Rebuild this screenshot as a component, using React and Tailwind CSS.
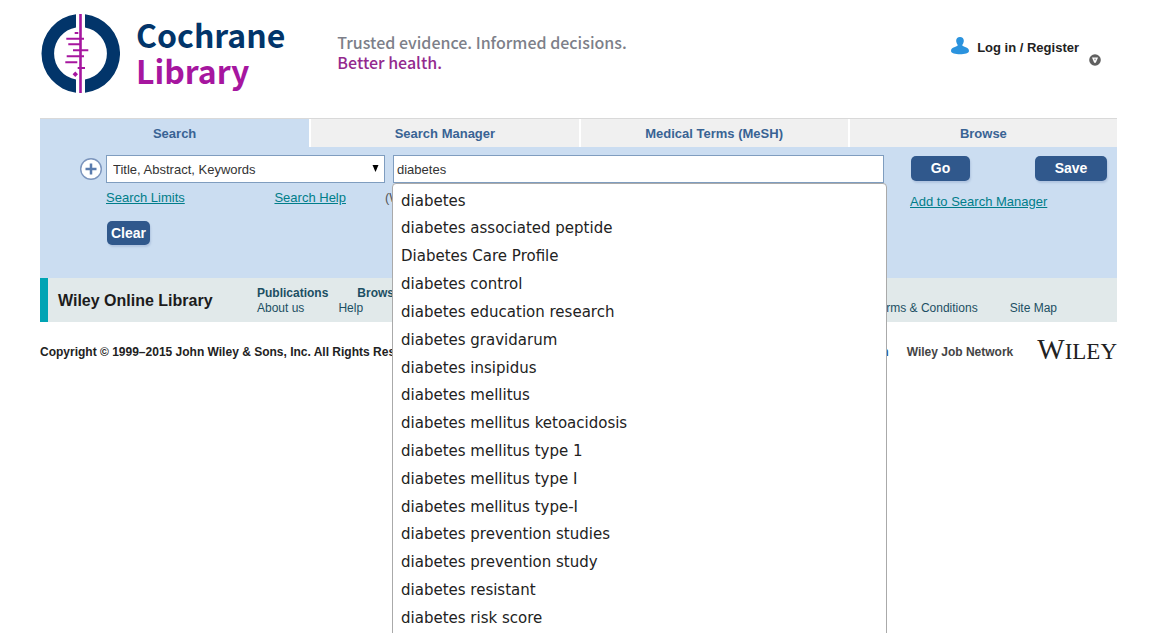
import React, { useState } from 'react';

const tabs = ['Search', 'Search Manager', 'Medical Terms (MeSH)', 'Browse'];

const suggestions = [
  'diabetes',
  'diabetes associated peptide',
  'Diabetes Care Profile',
  'diabetes control',
  'diabetes education research',
  'diabetes gravidarum',
  'diabetes insipidus',
  'diabetes mellitus',
  'diabetes mellitus ketoacidosis',
  'diabetes mellitus type 1',
  'diabetes mellitus type I',
  'diabetes mellitus type-I',
  'diabetes prevention studies',
  'diabetes prevention study',
  'diabetes resistant',
  'diabetes risk score',
];

function LogoMark() {
  return (
    <svg className="h-20 w-20 shrink-0" viewBox="0 0 80 80" aria-hidden="true">
      <path d="M36 .3A39.520 39.520 0 0 0 36 78.700V65.600A26.500 26.500 0 0 1 36 13.400Z" fill="#02356a" />
      <path d="M45 .3A39.450 39.450 0 0 1 45 78.700V65.600A26.500 26.500 0 0 0 45 13.400Z" fill="#02356a" />
      <g stroke="#a6169f" strokeWidth="2" fill="none">
        <path d="M40.500 0V79" strokeWidth="2.600" />
        <path d="M34.700 19H38.300M26.300 24.700H44M28.300 30.300H41M33 36.300H48.300M26.700 42.300H44M25.300 48.200H37.300M37.700 54H45" />
      </g>
      <path d="M35.300 57.500L38 60.200L35.300 62.900L32.600 60.200Z" fill="#a6169f" />
    </svg>
  );
}

function Header() {
  return (
    <header className="flex h-[118px] items-start pt-[14px]">
      <a href="#home" className="flex gap-4">
        <LogoMark />
        <span className="pt-[2px] font-['Noto_Sans_CJK_SC',sans-serif] text-[32px] leading-9 font-bold text-[#02356a]">
          <span className="block">Cochrane</span>
          <span className="block text-[#a6169f]">Library</span>
        </span>
      </a>
      <p className="ml-[52px] pt-[18px] font-['Noto_Sans_CJK_SC',sans-serif] text-[16px] leading-5 font-medium text-[#7d7f89]">
        Trusted evidence. Informed decisions.
        <span className="block text-[#93298e]">Better health.</span>
      </p>
      <div className="mt-5 mr-4 ml-auto flex">
        <a href="#login" className="flex h-7 gap-2 text-[13px] leading-7 font-bold text-[#222]">
          <svg className="mt-[3px] h-[18px] w-[18px]" viewBox="0 0 18 18" fill="#2b93de" aria-hidden="true">
            <path d="M9 0C11.600 0 13 1.800 12.800 4.200C12.600 6 11.500 7.500 11.200 8.300C11.600 9.800 18 10 18 14C18 18.300 0 18.300 0 14C0 10 6.400 9.800 6.800 8.300C6.500 7.500 5.400 6 5.200 4.200C5 1.800 6.400 0 9 0Z" />
          </svg>
          Log in / Register
        </a>
        <button type="button" aria-label="Account menu" className="mt-5 ml-[10px] h-3 w-3">
          <svg className="h-3 w-3" viewBox="0 0 12 12" aria-hidden="true">
            <circle cx="6" cy="6" r="5.800" fill="#606060" />
            <path d="M3 3.500H9L6.800 8.800H5.200Z" fill="#fff" />
            <path d="M5 4.800H7L6 6.800Z" fill="#888" />
          </svg>
        </button>
      </div>
    </header>
  );
}

function Suggestions({ onPick }) {
  return (
    <ul className="absolute top-7 -left-px z-10 grid h-[466px] w-[495px] auto-rows-fr rounded-t border border-[#aaa] bg-white pt-[3px] pb-4 font-['DejaVu_Sans',Verdana,sans-serif] text-[15px] text-[#222]">
      {suggestions.map((item) => (
        <li key={item} className="flex">
          <button type="button" onClick={() => onPick(item)} className="w-full px-2 text-left hover:bg-gray-100">
            {item}
          </button>
        </li>
      ))}
    </ul>
  );
}

function SearchPanel() {
  const [query, setQuery] = useState('diabetes');

  return (
    <form className="flex h-[131px] bg-[#cbddf1] pt-2 pr-[10px] pl-10 text-[13px]" onSubmit={(e) => e.preventDefault()}>
      <button type="button" aria-label="Add search line" className="mt-[3px] h-[22px] w-[22px] shrink-0">
        <svg viewBox="0 0 22 22" aria-hidden="true">
          <circle cx="11" cy="11" r="10.300" fill="#fff" stroke="#7c95bd" strokeWidth="1.400" />
          <path d="M11 5.500V16.500M5.500 11H16.500" stroke="#5a7cae" strokeWidth="2.500" />
        </svg>
      </button>

      <div className="ml-1 w-[279px] shrink-0">
        <div className="relative">
          <select
            aria-label="Search field"
            className="h-7 w-full appearance-none border border-[#7f9dbf] bg-white px-[6px] pt-px text-[#333]"
          >
            <option>Title, Abstract, Keywords</option>
            <option>Record Title</option>
            <option>Author</option>
          </select>
          <svg className="pointer-events-none absolute top-[10px] right-[6px] h-[7px] w-[7px]" viewBox="0 0 7 7" aria-hidden="true">
            <path d="M0.500 0H6.500L3.500 7Z" fill="#000" />
          </svg>
        </div>
        <div className="flex pt-[5px] leading-5 text-[#007d8a]">
          <a href="#limits" className="underline">Search Limits</a>
          <a href="#help" className="mr-[39px] ml-auto underline">Search Help</a>
        </div>
        <button type="button" className="mt-[13px] ml-px h-6 w-[43px] rounded-[5px] bg-[#30588c] text-[14px] font-bold text-white shadow-[1px_2px_2px_#b1c5e0]">
          Clear
        </button>
      </div>

      <div className="relative ml-2 min-w-0 flex-1">
        <input
          type="text"
          aria-label="Search text"
          value={query}
          onChange={(e) => setQuery(e.target.value)}
          className="h-7 w-full border border-[#7f9dbf] bg-white px-[3px] text-[#333] outline-none"
        />
        <p className="-ml-2 pt-[5px] leading-5 whitespace-nowrap text-[#555]">(Word variations have been searched)</p>
        <Suggestions onPick={setQuery} />
      </div>

      <div className="ml-[26px] w-[197px] shrink-0">
        <div className="flex justify-between pt-px pl-px">
          <button type="submit" className="h-[25px] w-[59px] rounded-[5px] bg-[#30588c] text-[14px] font-bold text-white shadow-[1px_2px_2px_#b1c5e0]">
            Go
          </button>
          <button type="button" className="h-[25px] w-[72px] rounded-[5px] bg-[#30588c] text-[14px] font-bold text-white shadow-[1px_2px_2px_#b1c5e0]">
            Save
          </button>
        </div>
        <a href="#add" className="mt-[11px] inline-block leading-5 text-[#007d8a] underline">Add to Search Manager</a>
      </div>
    </form>
  );
}

function Footer() {
  return (
    <footer className="text-xs">
      <div className="flex h-11 border-l-8 border-[#00a4b4] bg-[#e1e9ea] text-[#1c4f63]">
        <strong className="w-[199px] shrink-0 pl-[10px] text-[16px] leading-[46px] text-[#1c1c1c]">
          Wiley Online Library
        </strong>
        <div className="flex-1 pt-2 pl-[10px] leading-[15px]">
          <div className="flex gap-[29px] font-bold">
            <a href="#publications">Publications</a>
            <a href="#subject">Browse by Subject</a>
          </div>
          <div className="flex">
            <a href="#about">About us</a>
            <a href="#help" className="ml-[34px]">Help</a>
            <a href="#terms" className="ml-auto">Terms &amp; Conditions</a>
            <a href="#sitemap" className="mr-[60px] ml-8">Site Map</a>
          </div>
        </div>
      </div>
      <div className="flex items-start pt-[14px] leading-8 font-bold text-[#222]">
        <p className="whitespace-nowrap">Copyright © 1999–2015 John Wiley &amp; Sons, Inc. All Rights Reserved.</p>
        <a href="#wiley" className="mr-[18px] ml-auto text-[#275a9b]">About Wiley.com</a>
        <a href="#jobs" className="text-[#444]">Wiley Job Network</a>
        <span className="ml-6 font-['Liberation_Serif',serif] text-[29px] leading-[26px] font-normal">
          W<span className="text-[23px]">ILEY</span>
        </span>
      </div>
    </footer>
  );
}

export default function App() {
  const [active, setActive] = useState('Search');

  return (
    <main className="h-screen overflow-hidden bg-white pr-[51px] pl-10 font-['Liberation_Sans',Arial,sans-serif]">
      <Header />
      <nav className="grid grid-cols-4 border-t border-[#d9d9d9]">
        {tabs.map((tab) => (
          <button
            key={tab}
            type="button"
            onClick={() => setActive(tab)}
            className={`h-7 border-l-2 border-white pt-px text-[13px] font-bold text-[#396394] first:border-l-0 ${
              active === tab ? 'bg-[#cbddf1]' : 'bg-[#f0f0f0]'
            }`}
          >
            {tab}
          </button>
        ))}
      </nav>
      <SearchPanel />
      <Footer />
    </main>
  );
}
